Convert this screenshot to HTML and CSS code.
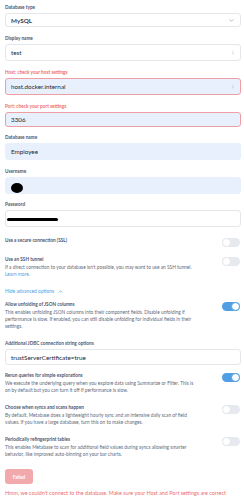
FILE: index.html
```html
<!DOCTYPE html>
<html>
<head>
<meta charset="utf-8">
<link rel="stylesheet" href="styles.css">
</head>
<body>
<div class="page">
  <div class="field">
    <div class="label">Database type</div>
    <div class="input select"><span class="val bold">MySQL</span>
      <svg class="chev" viewBox="0 0 6 4" width="5" height="3"><path d="M0.5 0.5 L3 3 L5.5 0.5" fill="none" stroke="#949aab" stroke-width="0.9"/></svg>
    </div>
  </div>
  <div class="field">
    <div class="label">Display name</div>
    <div class="input h17"><span class="val">test</span>
      <svg class="info" viewBox="0 0 3 6" width="2" height="5"><rect x="1" y="0" width="1" height="1" fill="#b8bcc4"/><rect x="1" y="2" width="1" height="4" fill="#b8bcc4"/></svg>
    </div>
  </div>
  <div class="field">
    <div class="label err">Host: check your host settings</div>
    <div class="input h17 error filled"><span class="val">host.docker.internal</span>
      <svg class="info" viewBox="0 0 3 6" width="2" height="5"><rect x="1" y="0" width="1" height="1" fill="#b8bcc4"/><rect x="1" y="2" width="1" height="4" fill="#b8bcc4"/></svg>
    </div>
  </div>
  <div class="field tight">
    <div class="label err">Port: check your port settings</div>
    <div class="input h15 error filled"><span class="val">3306</span></div>
  </div>
  <div class="field">
    <div class="label">Database name</div>
    <div class="input h17 filled noborder"><span class="val">Employee</span></div>
  </div>
  <div class="field tight">
    <div class="label">Username</div>
    <div class="input h17 filled noborder"><span class="blob"></span></div>
  </div>
  <div class="field last">
    <div class="label">Password</div>
    <div class="input h17 pw"><span class="line"></span></div>
  </div>

  <div class="trow m10">
    <div class="ttext"><div class="ttitle">Use a secure connection (SSL)</div></div>
    <span class="toggle"></span>
  </div>
  <div class="trow m9">
    <div class="ttext">
      <div class="ttitle">Use an SSH tunnel</div>
      <div class="tdesc">If a direct connection to your database isn't possible, you may want to use an SSH tunnel.<br><span class="link">Learn more.</span></div>
    </div>
    <span class="toggle"></span>
  </div>
  <div class="adv">Hide advanced options
    <svg viewBox="0 0 6 4" width="5" height="3"><path d="M0.5 3.5 L3 1 L5.5 3.5" fill="none" stroke="#509ee3" stroke-width="0.9"/></svg>
  </div>
  <div class="trow m6">
    <div class="ttext">
      <div class="ttitle">Allow unfolding of JSON columns</div>
      <div class="tdesc">This enables unfolding JSON columns into their component fields. Disable unfolding if<br>performance is slow. If enabled, you can still disable unfolding for individual fields in their<br>settings.</div>
    </div>
    <span class="toggle on"></span>
  </div>
  <div class="field jdbc">
    <div class="label">Additional JDBC connection string options</div>
    <div class="input h16"><span class="val">trustServerCertificate=true</span></div>
  </div>
  <div class="trow m7">
    <div class="ttext">
      <div class="ttitle">Rerun queries for simple explorations</div>
      <div class="tdesc">We execute the underlying query when you explore data using Summarize or Filter. This is<br>on by default but you can turn it off if performance is slow.</div>
    </div>
    <span class="toggle on"></span>
  </div>
  <div class="trow m10">
    <div class="ttext">
      <div class="ttitle">Choose when syncs and scans happen</div>
      <div class="tdesc">By default, Metabase does a lightweight hourly sync and an intensive daily scan of field<br>values. If you have a large database, turn this on to make changes.</div>
    </div>
    <span class="toggle"></span>
  </div>
  <div class="trow m10">
    <div class="ttext">
      <div class="ttitle">Periodically refingerprint tables</div>
      <div class="tdesc">This enables Metabase to scan for additional field values during syncs allowing smarter<br>behavior, like improved auto-binning on your bar charts.</div>
    </div>
    <span class="toggle"></span>
  </div>
  <button class="failed">Failed</button>
  <div class="errmsg">Hmm, we couldn't connect to the database. Make sure your Host and Port settings are correct</div>
</div>
</body>
</html>
```

FILE: styles.css
```css
html, body {
  margin: 0;
  padding: 0;
  background: #ffffff;
}
body {
  font-family: Lato, "Noto Sans", sans-serif;
  color: #4c5773;
}
.page {
  padding: 4px 3px 0 5px;
}
.field {
  margin-bottom: 8px;
}
.field.tight {
  margin-bottom: 7px;
}
.field.last {
  margin-bottom: 0;
}
.label {
  font-size: 4.7px;
  font-weight: 700;
  line-height: 6px;
  height: 6px;
  margin-bottom: 3px;
  color: #4c5773;
  white-space: nowrap;
}
.label.err {
  color: #ed6e6e;
}
.input {
  box-sizing: border-box;
  border: 1px solid #e3e6eb;
  border-radius: 3px;
  display: flex;
  align-items: center;
  justify-content: space-between;
  padding: 0 6px 0 5px;
  background: #ffffff;
  font-size: 6.3px;
  color: #23272e;
  white-space: nowrap;
}
.select { height: 14px; }
.h17 { height: 17px; }
.h16 { height: 16px; }
.h15 { height: 15px; }
.input.filled {
  background: #e8f0fe;
}
.input.noborder {
  border-color: #e8f0fe;
}
.input.error {
  border-color: #ef9ea3;
}
.val.bold {
  font-weight: 700;
  color: #39404c;
}
.chev { display: block; }
.info { display: block; }
.blob {
  width: 12px;
  height: 10px;
  border-radius: 50%;
  background: #000;
  margin-top: 4px;
}
.input.pw {
  padding-left: 1px;
}
.line {
  width: 51px;
  height: 3px;
  border-radius: 2px;
  background: #000;
  margin-top: 1px;
}
.trow {
  display: flex;
  justify-content: space-between;
  align-items: flex-start;
  padding-right: 1px;
}
.m6 { margin-top: 6px; }
.m7 { margin-top: 7px; }
.m9 { margin-top: 9px; }
.m10 { margin-top: 10px; }
.ttext {
  width: 214px;
}
.ttitle {
  font-size: 4.7px;
  font-weight: 700;
  line-height: 7px;
  color: #4c5773;
  white-space: nowrap;
}
.tdesc {
  margin-top: 1px;
  font-size: 4.8px;
  line-height: 7px;
  color: #636a7a;
  white-space: nowrap;
}
.link {
  color: #509ee3;
}
.toggle {
  flex: none;
  position: relative;
  width: 18px;
  height: 9px;
  margin-top: 1px;
  border-radius: 5px;
  background: #e6eaee;
}
.toggle::after {
  content: "";
  position: absolute;
  left: 0;
  top: 0;
  width: 9px;
  height: 9px;
  box-sizing: border-box;
  border-radius: 50%;
  background: #ffffff;
  border: 1px solid #e3e6eb;
}
.toggle.on {
  background: #509ee3;
}
.toggle.on::after {
  left: 9px;
  border-color: #509ee3;
}
.adv {
  margin-top: 10px;
  font-size: 4.9px;
  line-height: 7px;
  color: #509ee3;
  display: flex;
  align-items: center;
  gap: 4px;
}
.adv svg { display: block; }
.field.jdbc {
  margin-top: 10px;
  margin-bottom: 0;
}
.failed {
  display: block;
  margin-top: 11px;
  width: 28px;
  height: 15px;
  padding: 0;
  border: none;
  border-radius: 3px;
  background: #f2a9ac;
  color: #ffffff;
  font-family: Lato, "Noto Sans", sans-serif;
  font-size: 4.8px;
  font-weight: 700;
}
.errmsg {
  margin-top: 6px;
  font-size: 5.4px;
  line-height: 7px;
  color: #ed6e6e;
  white-space: nowrap;
}
```
